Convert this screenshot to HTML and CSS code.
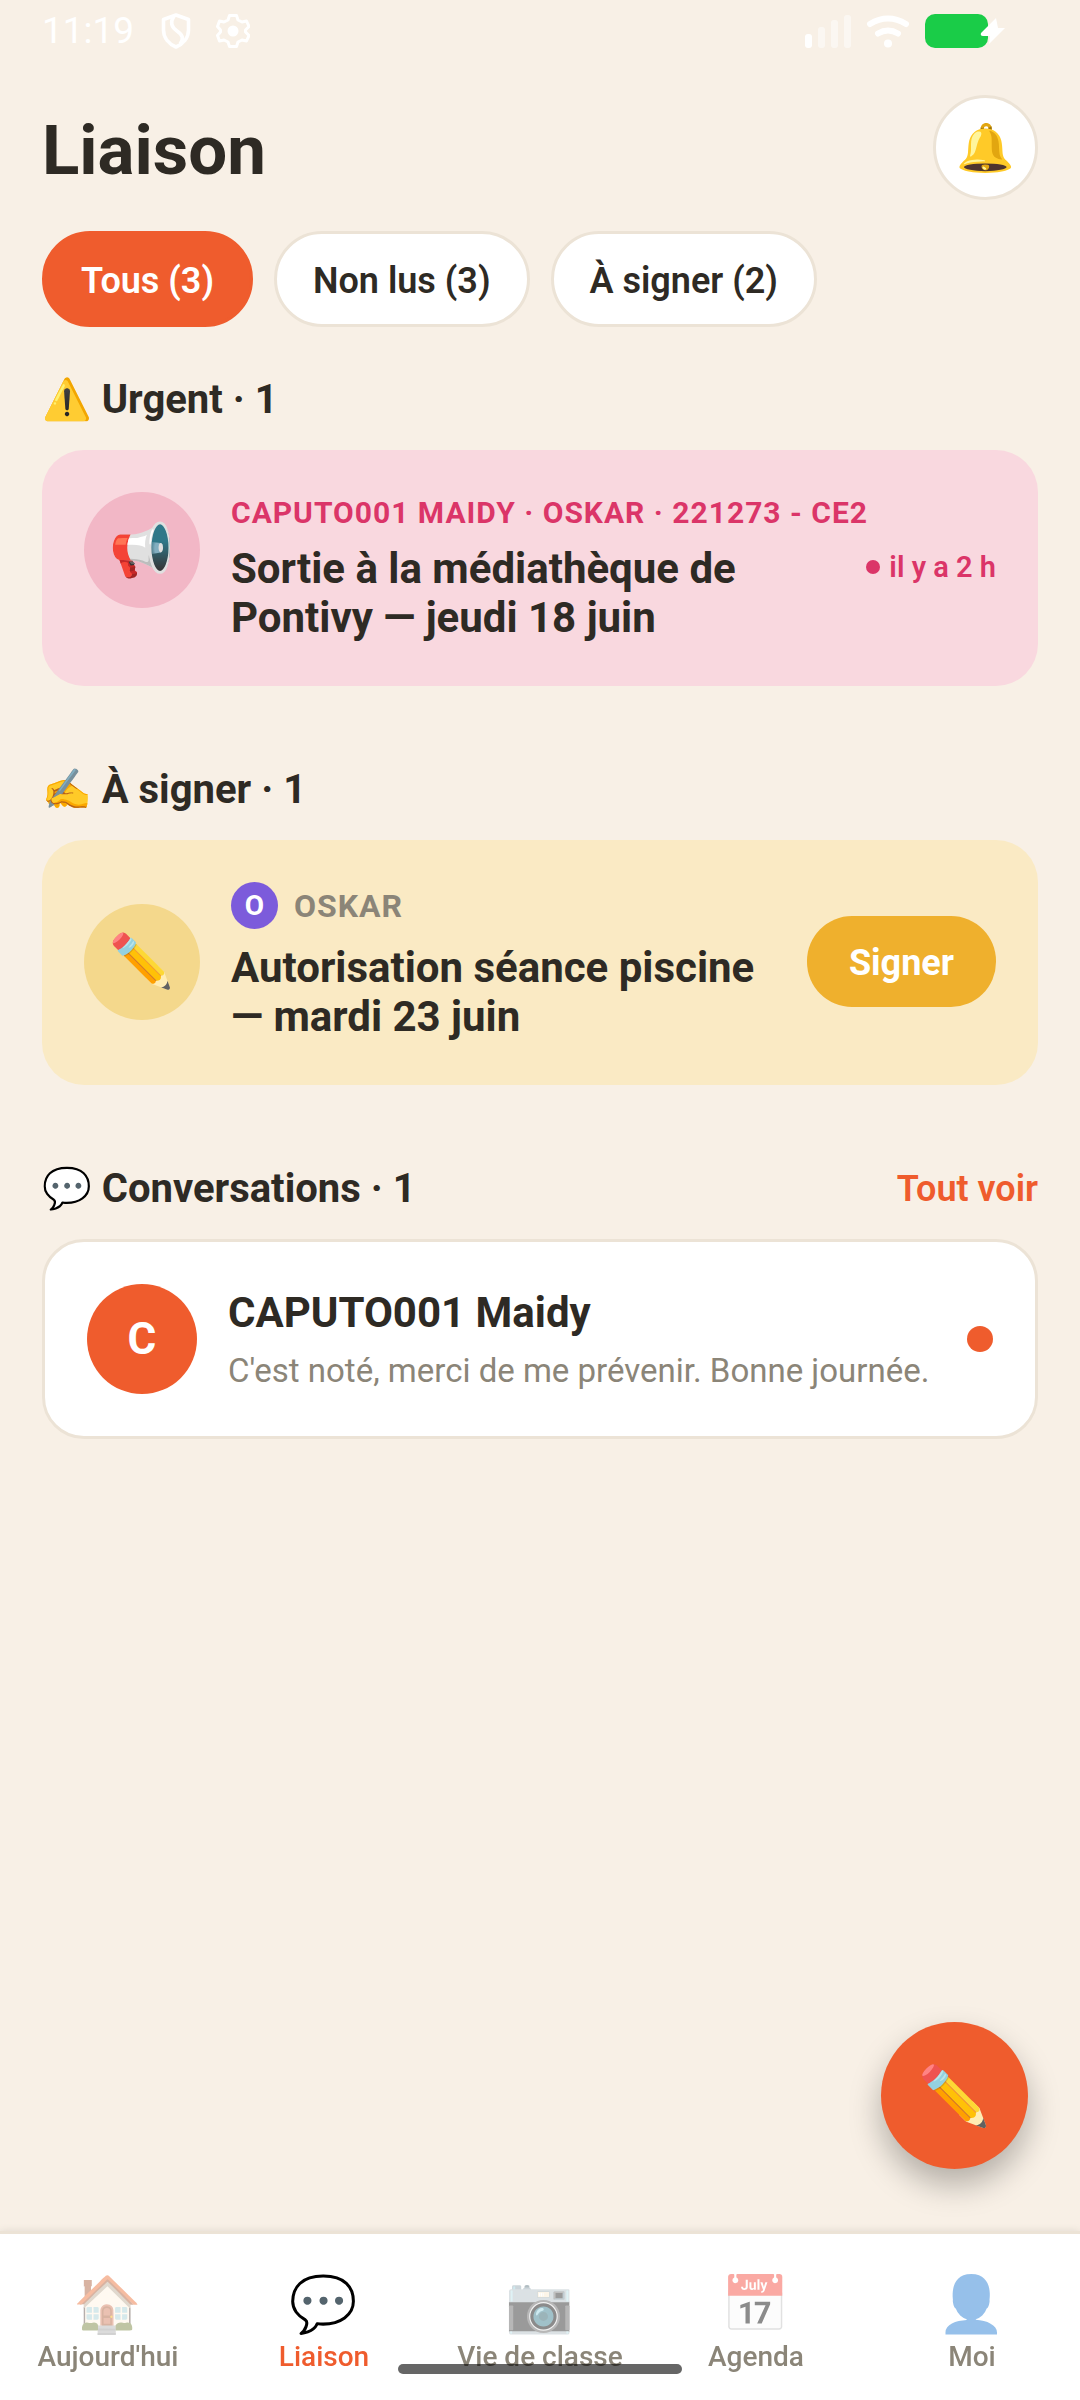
FILE: index.html
```html
<!DOCTYPE html>
<html lang="fr">
  <head>
    <meta charset="UTF-8" />
    <meta name="viewport" content="width=device-width, initial-scale=1.0" />
    <title>Liaison</title>
    <link rel="stylesheet" href="styles.css">
  </head>

  <body>
    <div class="status">
      <span class="time">11:19</span>
      <svg width="30" height="36" viewBox="0 0 30 36" fill="none" stroke="#fff" stroke-width="3.6" stroke-linejoin="round">
        <path d="M15 2L27.500 6.500V17C27.500 25 22 31 15 34C8 31 2.500 25 2.500 17V6.500Z" />
        <path d="M13 3C9 9 10 14 16 18C22 22 23 26 19 31" />
      </svg>
      <svg class="gear" width="34" height="36" viewBox="0 0 34 36" fill="none" stroke="#fff" stroke-width="3" stroke-linejoin="round">
        <path d="M13.500 2.500H20.500L22 7L26 9L30.500 8L33 13.500L29.500 17V19L33 22.500L30.500 28L26 27L22 29L20.500 33.500H13.500L12 29L8 27L3.500 28L1.500 22.500L4.500 19V17L1.500 13.500L3.500 8L8 9L12 7Z" />
        <circle cx="17" cy="18" r="5.500" fill="#fff" stroke="none" />
      </svg>
      <svg class="signal" width="46" height="34" viewBox="0 0 46 34" fill="#fff">
        <rect y="20" width="7" height="14" rx="3" />
        <g opacity=".5">
          <rect x="13" y="13" width="7" height="21" rx="3" />
          <rect x="26" y="6" width="7" height="28" rx="3" />
          <rect x="39" y="1" width="7" height="33" rx="3" />
        </g>
      </svg>
      <svg class="wifi" width="44" height="34" viewBox="0 0 44 34" fill="none" stroke="#fff" stroke-width="6" stroke-linecap="round">
        <path d="M4 10Q22 -1 40 10" />
        <path d="M12 19.500Q22 13.500 32 19.500" />
        <circle cx="22" cy="29.500" r="4" fill="#fff" stroke="none" />
      </svg>
      <svg class="battery" width="82" height="34" viewBox="0 0 82 34">
        <rect width="63" height="34" rx="10" fill="#1acc48" />
        <path d="M71 4L56 19Q55 22 58 22H65L64 30L80 14H73Z" fill="#fff" />
      </svg>
    </div>

    <header class="header">
      <h1>Liaison</h1>
      <button class="bell" aria-label="Notifications">🔔</button>
    </header>

    <div class="filters">
      <button class="chip active">Tous (3)</button>
      <button class="chip">Non lus (3)</button>
      <button class="chip">À signer (2)</button>
    </div>

    <main>
      <section>
        <div class="section-head">
          <h2>⚠️ Urgent · 1</h2>
        </div>
        <article class="card urgent">
          <div class="round">📢</div>
          <div class="card-body">
            <p class="label">CAPUTO001 MAIDY · OSKAR · 221273 - CE2</p>
            <div class="line">
              <h3>Sortie à la médiathèque de Pontivy — jeudi 18 juin</h3>
              <span class="ago">il y a 2 h</span>
            </div>
          </div>
        </article>
      </section>

      <section>
        <div class="section-head">
          <h2>✍️ À signer · 1</h2>
        </div>
        <article class="card to-sign">
          <div class="round">✏️</div>
          <div class="card-body">
            <div class="child"><span class="initial">O</span>OSKAR</div>
            <h3>Autorisation séance piscine — mardi 23 juin</h3>
          </div>
          <button class="sign">Signer</button>
        </article>
      </section>

      <section>
        <div class="section-head">
          <h2>💬 Conversations · 1</h2>
          <a href="#" class="see-all">Tout voir</a>
        </div>
        <article class="card talk">
          <div class="avatar">C</div>
          <div class="card-body">
            <h3>CAPUTO001 Maidy</h3>
            <p class="preview">C'est noté, merci de me prévenir. Bonne journée.</p>
          </div>
          <span class="unread"></span>
        </article>
      </section>
    </main>

    <button class="fab" aria-label="Nouveau message">✏️</button>

    <nav class="tabs">
      <a href="#" class="tab"><span class="icon">🏠</span>Aujourd'hui</a>
      <a href="#" class="tab current"><span class="icon">💬</span>Liaison</a>
      <a href="#" class="tab"><span class="icon">📷</span>Vie de classe</a>
      <a href="#" class="tab"><span class="icon">📅</span>Agenda</a>
      <a href="#" class="tab"><span class="icon">👤</span>Moi</a>
      <span class="home-bar"></span>
    </nav>
  </body>
</html>
```
FILE: styles.css
```css
* {
  box-sizing: border-box;
}

body {
  margin: 0;
  min-height: 100vh;
  display: flex;
  flex-direction: column;
  font-family: Roboto, "Noto Color Emoji", sans-serif;
  background-color: #f8f0e6;
  color: #2e2a24;
}

h1, h2, h3, p {
  margin: 0;
}

button {
  font-family: inherit;
  border: none;
  padding: 0;
  cursor: pointer;
}

a {
  text-decoration: none;
}

svg {
  display: block;
  flex: none;
}

/* status bar */
.status {
  display: flex;
  align-items: center;
  height: 53px;
  padding: 8px 73px 0 42px;
  color: #fff;
}

.time {
  font-size: 37px;
  margin-right: 27px;
}

.gear {
  margin-left: 25px;
}

.signal {
  margin-left: auto;
}

.wifi,
.battery {
  margin-left: 15px;
}

.header {
  display: flex;
  align-items: center;
  justify-content: space-between;
  padding: 42px 42px 0;
}

h1 {
  padding-top: 6px;
  font-size: 69px;
  line-height: 80px;
}

.bell {
  display: grid;
  place-items: center;
  width: 105px;
  height: 105px;
  border: 3px solid #ece3d6;
  border-radius: 50%;
  background-color: white;
  font-size: 47px;
}

.filters {
  display: flex;
  gap: 21px;
  padding: 31px 42px 0;
}

.chip {
  height: 96px;
  padding: 3px 36px 0;
  border: 3px solid #ece3d6;
  border-radius: 48px;
  background-color: white;
  color: #2e2a24;
  font-size: 36px;
  font-weight: 600;
}

.chip.active {
  border-color: #ef5c2d;
  background-color: #ef5c2d;
  color: white;
}

main {
  display: flex;
  flex-direction: column;
  gap: 80px;
  padding: 49px 42px;
}

.section-head {
  display: flex;
  align-items: center;
  justify-content: space-between;
  margin-bottom: 26px;
}

h2 {
  font-size: 40px;
  line-height: 48px;
}

.see-all {
  color: #ef5c2d;
  font-size: 36px;
  font-weight: 600;
}

/* cards */
.card {
  display: flex;
  align-items: center;
  gap: 31px;
  padding: 42px 42px 44px;
  border-radius: 42px;
}

.card-body {
  flex: 1;
  display: flex;
  flex-direction: column;
  gap: 10px;
}

.round {
  display: grid;
  place-items: center;
  width: 116px;
  height: 116px;
  border-radius: 50%;
  font-size: 52px;
}

h3 {
  font-size: 42px;
  line-height: 49px;
}

.urgent {
  align-items: flex-start;
  background-color: #f9d8df;
}

.urgent .round {
  background-color: #f2b7c6;
}

.label {
  color: #db3568;
  font-size: 30px;
  font-weight: bold;
  line-height: 42px;
  letter-spacing: 1px;
}

.line {
  display: flex;
  justify-content: space-between;
  gap: 32px;
}

.ago {
  display: flex;
  align-items: center;
  gap: 9px;
  height: 46px;
  color: #db3568;
  font-size: 29px;
  font-weight: 600;
  white-space: nowrap;
}

.ago::before {
  content: "";
  width: 14px;
  height: 14px;
  border-radius: 50%;
  background-color: #db3568;
}

.to-sign {
  background-color: #faeac4;
}

.to-sign .round {
  background-color: #f4d88c;
}

.to-sign .card-body {
  gap: 14px;
}

.child {
  display: flex;
  align-items: center;
  gap: 16px;
  color: #8b8578;
  font-size: 32px;
  font-weight: bold;
  letter-spacing: 1px;
}

.initial {
  display: grid;
  place-items: center;
  width: 47px;
  height: 47px;
  border-radius: 50%;
  background-color: #7c5bdb;
  color: white;
  font-size: 28px;
  letter-spacing: 0;
}

.sign {
  height: 91px;
  padding: 3px 42px 0;
  border-radius: 45px;
  background-color: #efb02d;
  color: white;
  font-size: 36px;
  font-weight: bold;
}

.talk {
  padding: 42px;
  border: 3px solid #ece3d6;
  background-color: white;
}

.talk .card-body {
  gap: 14px;
}

.avatar {
  display: grid;
  place-items: center;
  width: 110px;
  height: 110px;
  border-radius: 50%;
  background-color: #ef5c2d;
  color: white;
  font-size: 44px;
  font-weight: bold;
}

.preview {
  color: #8b8578;
  font-size: 33px;
  line-height: 40px;
}

.unread {
  width: 26px;
  height: 26px;
  border-radius: 50%;
  background-color: #ef5c2d;
}

.fab {
  position: fixed;
  right: 52px;
  bottom: 231px;
  display: grid;
  place-items: center;
  width: 147px;
  height: 147px;
  border-radius: 50%;
  background-color: #ef5c2d;
  box-shadow: 0 16px 32px rgba(0, 0, 0, 0.28);
  font-size: 58px;
}

/* bottom tabs */
.tabs {
  position: relative;
  display: flex;
  margin-top: auto;
  padding: 39px 0 26px;
  border-top: 3px solid #ece3d6;
  background-color: white;
  box-shadow: 0 0 8px rgba(0, 0, 0, 0.1);
}

.tab {
  flex: 1;
  display: flex;
  flex-direction: column;
  align-items: center;
  gap: 5px;
  color: #8b8578;
  font-size: 28px;
  font-weight: 500;
  line-height: 34px;
}

.icon {
  font-size: 55px;
  line-height: 62px;
  opacity: 0.45;
}

.tab.current {
  color: #ef5c2d;
}

.tab.current .icon {
  opacity: 1;
}

/* system gesture bar, drawn over the labels */
.home-bar {
  position: absolute;
  left: 50%;
  bottom: 26px;
  width: 284px;
  height: 10px;
  margin-left: -142px;
  border-radius: 5px;
  background-color: rgba(0, 0, 0, 0.6);
}
```
